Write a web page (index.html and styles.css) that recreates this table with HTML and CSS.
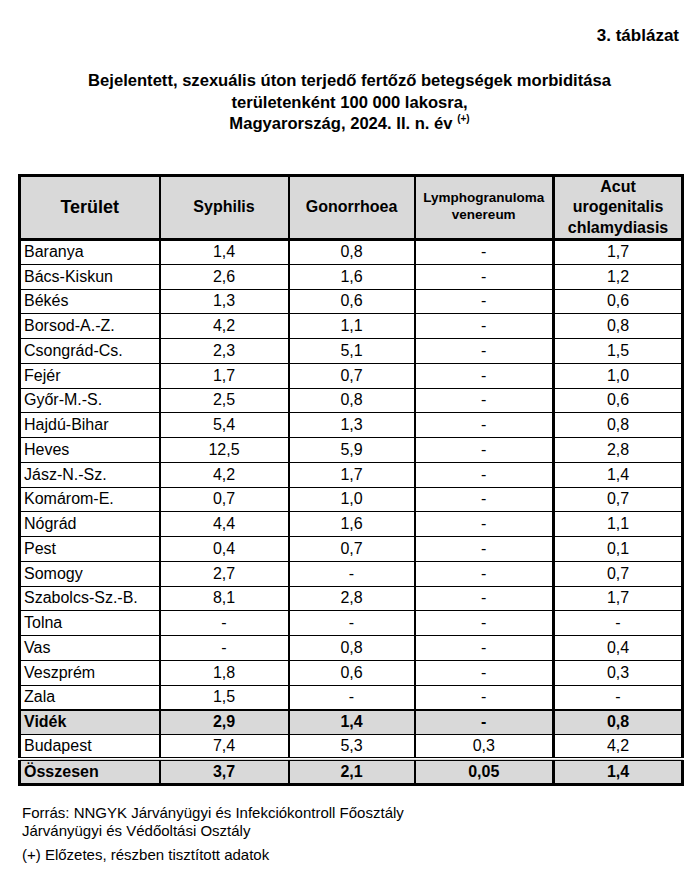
FILE: index.html
```html
<!DOCTYPE html>
<html lang="hu">
<head>
<meta charset="utf-8">
<title>3. táblázat</title>
<link rel="stylesheet" href="styles.css">
</head>
<body>
<div class="page">
  <div class="tabno">3. táblázat</div>
  <h1 class="title">Bejelentett, szexuális úton terjedő fertőző betegségek morbiditása<br>területenként 100 000 lakosra,<br>Magyarország, 2024. II. n. év <sup>(+)</sup></h1>
  <table class="data">
    <colgroup>
      <col class="c1"><col class="c2"><col class="c3"><col class="c4"><col class="c5">
    </colgroup>
    <thead>
      <tr>
        <th class="h-ter">Terület</th>
        <th>Syphilis</th>
        <th>Gonorrhoea</th>
        <th class="h-small">Lymphogranuloma<br>venereum</th>
        <th class="c-last">Acut<br>urogenitalis<br>chlamydiasis</th>
      </tr>
    </thead>
    <tbody>
      <tr><td>Baranya</td><td>1,4</td><td>0,8</td><td>-</td><td class="c-last">1,7</td></tr>
      <tr><td>Bács-Kiskun</td><td>2,6</td><td>1,6</td><td>-</td><td class="c-last">1,2</td></tr>
      <tr><td>Békés</td><td>1,3</td><td>0,6</td><td>-</td><td class="c-last">0,6</td></tr>
      <tr><td>Borsod-A.-Z.</td><td>4,2</td><td>1,1</td><td>-</td><td class="c-last">0,8</td></tr>
      <tr><td>Csongrád-Cs.</td><td>2,3</td><td>5,1</td><td>-</td><td class="c-last">1,5</td></tr>
      <tr><td>Fejér</td><td>1,7</td><td>0,7</td><td>-</td><td class="c-last">1,0</td></tr>
      <tr><td>Győr-M.-S.</td><td>2,5</td><td>0,8</td><td>-</td><td class="c-last">0,6</td></tr>
      <tr><td>Hajdú-Bihar</td><td>5,4</td><td>1,3</td><td>-</td><td class="c-last">0,8</td></tr>
      <tr><td>Heves</td><td>12,5</td><td>5,9</td><td>-</td><td class="c-last">2,8</td></tr>
      <tr><td>Jász-N.-Sz.</td><td>4,2</td><td>1,7</td><td>-</td><td class="c-last">1,4</td></tr>
      <tr><td>Komárom-E.</td><td>0,7</td><td>1,0</td><td>-</td><td class="c-last">0,7</td></tr>
      <tr><td>Nógrád</td><td>4,4</td><td>1,6</td><td>-</td><td class="c-last">1,1</td></tr>
      <tr><td>Pest</td><td>0,4</td><td>0,7</td><td>-</td><td class="c-last">0,1</td></tr>
      <tr><td>Somogy</td><td>2,7</td><td>-</td><td>-</td><td class="c-last">0,7</td></tr>
      <tr><td>Szabolcs-Sz.-B.</td><td>8,1</td><td>2,8</td><td>-</td><td class="c-last">1,7</td></tr>
      <tr><td>Tolna</td><td>-</td><td>-</td><td>-</td><td class="c-last">-</td></tr>
      <tr><td>Vas</td><td>-</td><td>0,8</td><td>-</td><td class="c-last">0,4</td></tr>
      <tr><td>Veszprém</td><td>1,8</td><td>0,6</td><td>-</td><td class="c-last">0,3</td></tr>
      <tr><td>Zala</td><td>1,5</td><td>-</td><td>-</td><td class="c-last">-</td></tr>
      <tr class="sum vidrow"><td>Vidék</td><td>2,9</td><td>1,4</td><td>-</td><td class="c-last">0,8</td></tr>
      <tr><td>Budapest</td><td>7,4</td><td>5,3</td><td>0,3</td><td class="c-last">4,2</td></tr>
      <tr class="sum totrow"><td>Összesen</td><td>3,7</td><td>2,1</td><td>0,05</td><td class="c-last">1,4</td></tr>
    </tbody>
  </table>
  <div class="notes">
    <p class="src">Forrás: NNGYK Járványügyi és Infekciókontroll Főosztály<br>Járványügyi és Védőoltási Osztály</p>
    <p class="prelim">(+) Előzetes, részben tisztított adatok</p>
  </div>
</div>
</body>
</html>
```
FILE: styles.css
```css
* { box-sizing: border-box; }
html, body { margin: 0; padding: 0; background: #fff; }
body {
  font-family: "Liberation Sans", Arial, sans-serif;
  color: #000;
}
.page {
  width: 700px;
  padding: 26px 19px 0 18px;
}
.tabno {
  font-family: "Liberation Sans Narrow", "Arial Narrow", "Liberation Sans", sans-serif;
  font-weight: bold;
  font-size: 17px;
  line-height: 20px;
  text-align: right;
  padding-right: 2px;
}
.title {
  font-family: "Liberation Sans Narrow", "Arial Narrow", "Liberation Sans", sans-serif;
  font-weight: bold;
  font-size: 16.6px;
  line-height: 21.5px;
  text-align: center;
  margin: 24px 0 0 0;
}
.title sup {
  font-size: 10px;
  line-height: 0;
  vertical-align: baseline;
  position: relative;
  top: -7px;
}
table.data {
  margin-top: 39px;
  border-collapse: collapse;
  table-layout: fixed;
  width: 663px;
  border: 3px solid #000;
  font-size: 16px;
}
col.c1 { width: 140px; }
col.c2 { width: 129px; }
col.c3 { width: 126px; }
col.c4 { width: 139px; }
col.c5 { width: 129px; }
.data th {
  background: #d9d9d9;
  height: 60px;
  border: 2px solid #000;
  border-bottom: 3px solid #000;
  font-weight: bold;
  font-size: 16px;
  line-height: 20.5px;
  padding: 0 2px;
  text-align: center;
}
.data th.h-ter { font-size: 18px; }
.data th.h-small { font-size: 13.5px; line-height: 17px; padding-bottom: 2px; }
.data td {
  height: 24.75px;
  padding: 0 2px;
  border-left: 2px solid #000;
  border-right: 2px solid #000;
  border-bottom: 1px solid #000;
  text-align: center;
  line-height: 18px;
}
.data td:first-child { text-align: left; padding-left: 3px; }
.data .c-last { border-left-width: 3px; }
.data tr.sum td { background: #d9d9d9; font-weight: bold; }
.data tr.vidrow td { border-top: 2px solid #000; }
.data tr.totrow td { border-top: 4px double #000; }
.notes {
  font-size: 15px;
  line-height: 18px;
  padding-left: 4px;
  margin-top: 18px;
}
.notes p { margin: 0; }
.notes .prelim { margin-top: 6px; }
```
